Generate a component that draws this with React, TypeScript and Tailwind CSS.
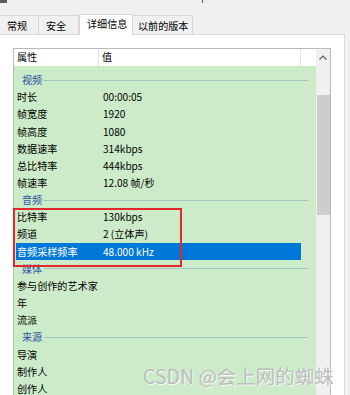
import React from "react";

type Row =
  | { kind: "group"; label: string }
  | { kind: "item"; name: string; value?: string; selected?: boolean };

const rows: Row[] = [
  { kind: "group", label: "视频" },
  { kind: "item", name: "时长", value: "00:00:05" },
  { kind: "item", name: "帧宽度", value: "1920" },
  { kind: "item", name: "帧高度", value: "1080" },
  { kind: "item", name: "数据速率", value: "314kbps" },
  { kind: "item", name: "总比特率", value: "444kbps" },
  { kind: "item", name: "帧速率", value: "12.08 帧/秒" },
  { kind: "group", label: "音频" },
  { kind: "item", name: "比特率", value: "130kbps" },
  { kind: "item", name: "频道", value: "2 (立体声)" },
  { kind: "item", name: "音频采样频率", value: "48.000 kHz", selected: true },
  { kind: "group", label: "媒体" },
  { kind: "item", name: "参与创作的艺术家" },
  { kind: "item", name: "年" },
  { kind: "item", name: "流派" },
  { kind: "group", label: "来源" },
  { kind: "item", name: "导演" },
  { kind: "item", name: "制作人" },
  { kind: "item", name: "创作人" },
];

export default function App() {
  return (
    <div
      className="relative w-[350px] h-[395px] overflow-hidden bg-[#f0f0f0] text-[10.1px] text-black"
      style={{ fontFamily: '"Noto Sans CJK SC", "Noto Sans", sans-serif' }}
    >
      {/* top strip */}
      <div className="relative h-[14px]">
        <div className="absolute left-0 top-0 w-[7px] h-[3px] bg-[#5a5a5a]" />
        <div className="absolute left-[202px] top-0 w-[1px] h-[3px] bg-[#5a5a5a]" />
      </div>

      {/* tabs */}
      <div className="flex items-end h-[20px] leading-none">
        <div className="w-[39px] h-[19px] flex items-center pl-[7px] pt-[2px] bg-[#f0f0f0] border-t border-r border-[#d9d9d9]">
          常规
        </div>
        <div className="w-[40px] h-[19px] flex items-center pl-[7px] pt-[2px] bg-[#f0f0f0] border-t border-r border-[#d9d9d9]">
          安全
        </div>
        <div className="relative z-10 w-[54px] h-[21px] -mb-px flex items-center pl-[7px] pb-[2px] bg-white border-t border-l border-r border-[#d9d9d9]">
          详细信息
        </div>
        <div className="w-[60px] h-[19px] flex items-center pl-[5px] pt-[2px] bg-[#f0f0f0] border-t border-r border-[#d9d9d9]">
          以前的版本
        </div>
      </div>

      {/* panel */}
      <div className="w-[345px] h-[400px] bg-white border-t border-r border-[#d9d9d9] pt-[13px] pl-[13px]">
        <div className="w-[318px] h-[400px] border border-[#b9b9b9] flex">
          <div className="w-[302px] flex flex-col">
            {/* header */}
            <div className="h-[17px] flex bg-white leading-none">
              <div className="w-[85px] flex items-center pl-[3px] border-r border-[#e5e5e5]">属性</div>
              <div className="w-[202px] flex items-center pl-[3px] border-r border-[#e5e5e5]">值</div>
              <div className="flex-1" />
            </div>
            {/* body */}
            <div className="flex-1 bg-[#ccebc8] pt-[5.5px] leading-none">
              {rows.map((r, i) =>
                r.kind === "group" ? (
                  <div key={i} className="ml-[2px] w-[292px] h-[17.17px] flex items-center">
                    <span className="pl-[6px] text-[#2b52a3]">{r.label}</span>
                    <div className="flex-1 ml-[2px] h-px bg-[#a0c4c4]" />
                  </div>
                ) : (
                  <div
                    key={i}
                    className={
                      r.selected
                        ? "ml-[2px] w-[285px] h-[17.17px] flex items-center bg-[#0078d7] text-white"
                        : "ml-[2px] w-[285px] h-[17.17px] flex items-center"
                    }
                  >
                    <div className="w-[84px] pl-[1px] whitespace-nowrap">{r.name}</div>
                    <div className="pl-[3px] whitespace-nowrap">{r.value ?? ""}</div>
                  </div>
                )
              )}
            </div>
          </div>
          {/* scrollbar */}
          <div className="w-[14px] bg-[#f0f0f0] flex flex-col items-center">
            <div className="h-[17px] flex items-center justify-center">
              <svg width="8" height="5" viewBox="0 0 8 5">
                <path d="M0.5 4.5 L4 1 L7.5 4.5" fill="none" stroke="#606060" strokeWidth="1.2" />
              </svg>
            </div>
            <div className="mt-[29px] w-[13px] h-[120px] bg-[#cdcdcd]" />
          </div>
        </div>
      </div>

      {/* red annotation box */}
      <div className="absolute left-[13px] top-[208px] w-[169px] h-[59px] border-2 border-[#e3262b]" />

      {/* watermark */}
      <div className="absolute left-[143px] top-[366px] text-[19.5px] leading-none whitespace-nowrap text-[#bdbdbd] [text-shadow:1px_1px_1px_rgba(255,255,255,0.9)]">
        CSDN @会上网的蜘蛛
      </div>
    </div>
  );
}
